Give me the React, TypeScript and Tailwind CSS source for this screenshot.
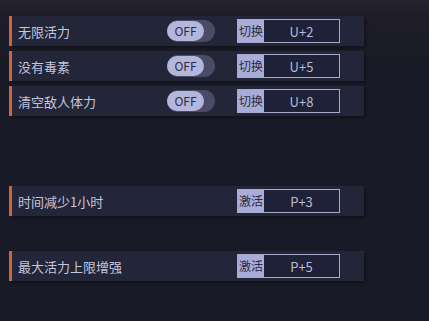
import React from "react";

const font = { fontFamily: '"Noto Sans CJK SC", "Noto Sans", sans-serif' };

function Toggle() {
  return (
    <div className="ml-auto mr-[22px] flex h-[22px] w-[48px] items-center rounded-full bg-[#4a4c66]">
      <div className="flex h-[20px] w-[37px] items-center justify-center rounded-full bg-[#b4b7dc] text-[12px] leading-none text-[#2a2b3f]">
        OFF
      </div>
    </div>
  );
}

function Key({ label, keyText }: { label: string; keyText: string }) {
  return (
    <div className="flex h-[24px] w-[103px] border border-[#a7a9c8] bg-[#1f2138]">
      <div className="flex w-[26px] items-center justify-center bg-[#a9acd8] text-[12px] leading-none text-[#2a2b3d]">
        {label}
      </div>
      <div className="flex flex-1 items-center justify-center text-[13px] leading-none text-[#b8bad6]">
        {keyText}
      </div>
    </div>
  );
}

function Row({ name, toggle, label, keyText, className = "" }: { name: string; toggle: boolean; label: string; keyText: string; className?: string }) {
  return (
    <div className={"flex h-[30px] w-[355px] items-center bg-[#232538] shadow-[2px_2px_3px_rgba(0,0,0,0.35)] " + className}>
      <div className="h-full w-[3px] bg-[#d0643a]" />
      <div className="ml-[6px] text-[13px] leading-none text-[#c4c6de]">{name}</div>
      {toggle ? <Toggle /> : <div className="ml-auto" />}
      <div className="mr-[24px]">
        <Key label={label} keyText={keyText} />
      </div>
    </div>
  );
}

export default function App() {
  return (
    <div
      className="h-[321px] w-[429px] overflow-hidden bg-[linear-gradient(to_bottom,#27232c_0px,#1e1d29_14px,#1a1b27_60px,#181a27_100%)] pl-[9px] pt-[16px]"
      style={font}
    >
      <div className="flex flex-col gap-[5px]">
        <Row name="无限活力" toggle label="切换" keyText="U+2" />
        <Row name="没有毒素" toggle label="切换" keyText="U+5" />
        <Row name="清空敌人体力" toggle label="切换" keyText="U+8" />
        <Row name="时间减少1小时" toggle={false} label="激活" keyText="P+3" className="mt-[65px]" />
        <Row name="最大活力上限增强" toggle={false} label="激活" keyText="P+5" className="mt-[30px]" />
      </div>
    </div>
  );
}
